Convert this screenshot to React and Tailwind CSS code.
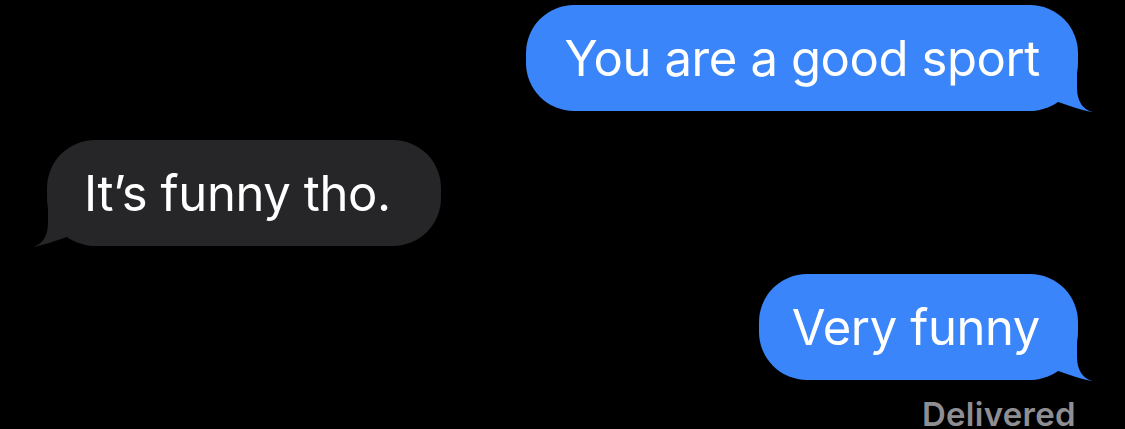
import React from "react";

const BLUE = "#3a85f9";
const GRAY = "#262628";

function Tail({ color, left }) {
  return (
    <svg
      width="66"
      height="56"
      viewBox="0 0 66 56"
      className={
        left
          ? "absolute left-[-17px] bottom-[-2px] -scale-x-100"
          : "absolute right-[-17px] bottom-[-2px]"
      }
    >
      <path
        d="M48 4 L48 31 C48 44 54 53 64 55 C55 54 38 48 26 44 C19 49 10 54 0 54 L0 4 Z"
        fill={color}
      />
    </svg>
  );
}

function Bubble({ text, side, className }) {
  const left = side === "left";
  const color = left ? GRAY : BLUE;
  return (
    <div
      className={
        "relative flex h-[106px] shrink-0 items-center rounded-[48px] text-white " +
        (left ? "self-start bg-[#262628] " : "self-end bg-[#3a85f9] ") +
        className
      }
    >
      <Tail color={color} left={left} />
      <span className="relative whitespace-nowrap text-[49px] leading-none tracking-[-0.4px]">
        {text}
      </span>
    </div>
  );
}

export default function App() {
  return (
    <div
      className="flex h-[429px] w-full flex-col overflow-hidden bg-black px-[47px] pt-[5px]"
      style={{ fontFamily: "Inter, 'Noto Sans', sans-serif" }}
    >
      <Bubble text="You are a good sport" side="right" className="pl-[38px] pr-[38px]" />
      <div className="h-[29px] shrink-0" />
      <Bubble text="It’s funny tho." side="left" className="pl-[37px] pr-[50px]" />
      <div className="h-[28px] shrink-0" />
      <Bubble text="Very funny" side="right" className="pl-[33px] pr-[38px]" />
      <div className="shrink-0 self-end pr-[2px] pt-[19px] text-[33px] font-semibold leading-[30px] tracking-[0.3px] text-[#8e8e93]">
        Delivered
      </div>
    </div>
  );
}
